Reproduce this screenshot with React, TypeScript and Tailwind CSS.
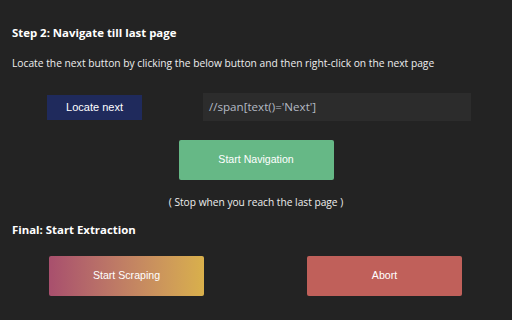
export default function App() {
    return (
        <div className="w-[512px] h-[320px] overflow-hidden bg-[#232323] text-white" style={{ fontFamily: '"Open Sans", sans-serif' }}>
            <div className="px-3 pt-[25px]">
                <h2 className="text-[11.4px] font-bold leading-4">Step 2: Navigate till last page</h2>
                <p className="mt-[14px] text-[10.25px] leading-4 text-[#eeeeee]">
                    Locate the next button by clicking the below button and then right-click on the next page
                </p>
            </div>

            <div className="mt-[22px] flex items-center">
                <button className="ml-[47px] h-[25px] w-[95px] bg-[#1f2a5c] text-[11px] text-white font-['Liberation_Sans',sans-serif]">
                    Locate next
                </button>
                <div className="ml-[61px] flex h-[28px] w-[268px] items-center bg-[#2c2c2c] pl-[6px] text-[11.6px] text-[#b4bac4]">
                    //span[text()='Next']
                </div>
            </div>

            <div className="mt-[19px] flex justify-center">
                <button className="h-[40px] w-[155px] rounded-[2px] bg-[#66b886] text-[10.6px] text-white font-['Liberation_Sans',sans-serif]">
                    Start Navigation
                </button>
            </div>

            <p className="mt-[14px] text-center text-[10.2px] leading-4 text-[#eeeeee]">( Stop when you reach the last page )</p>

            <h2 className="mt-[12px] px-3 text-[11.4px] font-bold leading-4">Final: Start Extraction</h2>

            <div className="mt-[18px] flex items-center">
                <button className="ml-[49px] h-[40px] w-[155px] rounded-[2px] bg-gradient-to-r from-[#a84f6d] to-[#d9b04b] text-[10.6px] text-white font-['Liberation_Sans',sans-serif]">
                    Start Scraping
                </button>
                <button className="ml-[103px] h-[40px] w-[155px] rounded-[2px] bg-[#c0605a] text-[10.6px] text-white font-['Liberation_Sans',sans-serif]">
                    Abort
                </button>
            </div>
        </div>
    );
}
